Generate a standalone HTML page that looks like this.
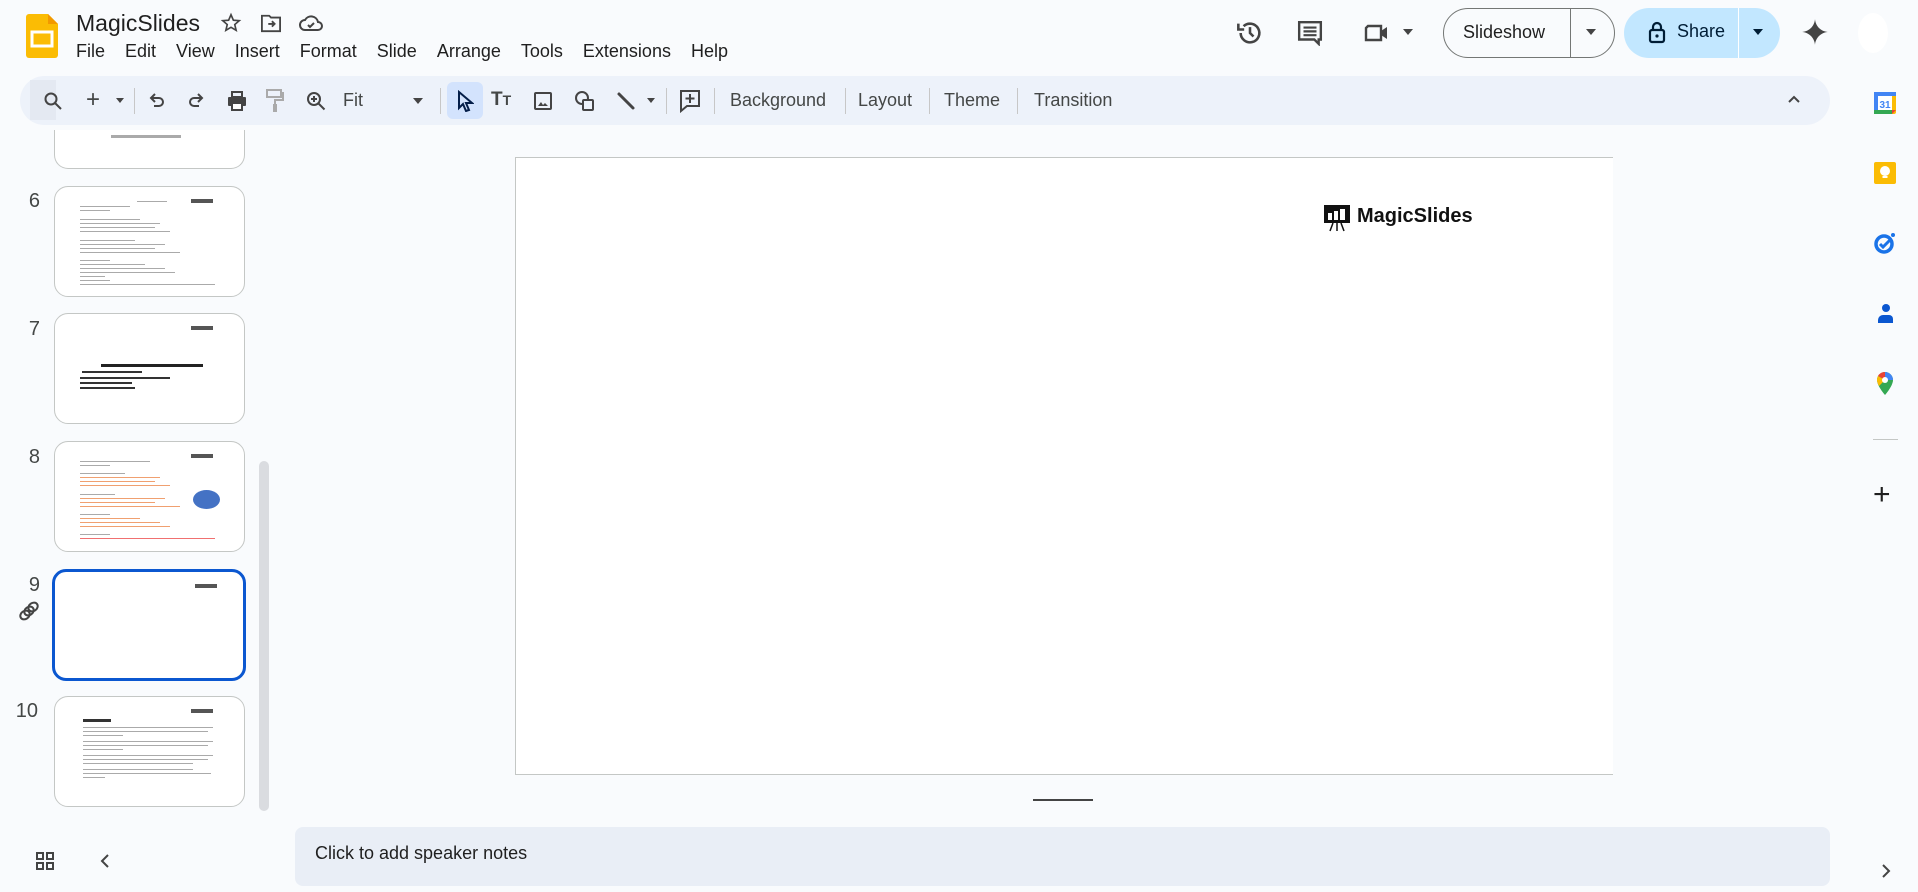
<!DOCTYPE html>
<html><head><meta charset="utf-8"><style>
*{margin:0;padding:0;box-sizing:border-box}
body{width:1918px;height:892px;background:#f9fbfd;font-family:"Liberation Sans",Arial,sans-serif;color:#1f1f1f;position:relative;overflow:hidden}
.a{position:absolute}
.menu span{margin-right:20px}
.tb{color:#444746;font-size:18px}
.thumb{position:absolute;left:54px;width:191px;height:111px;background:#fff;border:1px solid #c4c7c5;border-radius:14px;overflow:hidden}
.num{position:absolute;font-size:20px;color:#444746;text-align:right;width:40px;left:0}
.ln{position:absolute;height:2px;background:#aaa}
.sep{position:absolute;top:88px;width:1px;height:26px;background:#c7c7c7}
</style></head><body>
<!-- logo -->
<svg class="a" style="left:26px;top:14px" width="32" height="44" viewBox="0 0 32 44"><path d="M3 0h19l10 10v31a3 3 0 0 1-3 3H3a3 3 0 0 1-3-3V3a3 3 0 0 1 3-3z" fill="#fbbc04"/><path d="M22 0l10 10h-10z" fill="#f29900"/><rect x="6" y="18" width="20" height="14" fill="none" stroke="#fff" stroke-width="3"/></svg>
<div class="a" style="left:76px;top:10px;font-size:23px">MagicSlides</div>
<svg class="a" style="left:220px;top:12px" width="22" height="22" viewBox="0 0 24 24"><path d="M12 3l2.6 6 6.4.5-4.9 4.2 1.5 6.3L12 16.7 6.4 20l1.5-6.3L3 9.5l6.4-.5z" fill="none" stroke="#444" stroke-width="1.8"/></svg>
<svg class="a" style="left:260px;top:13px" width="22" height="20" viewBox="0 0 24 22"><path d="M2 3h8l2 2h10v15H2z" fill="none" stroke="#444" stroke-width="2"/><path d="M9 12h7M13 9l3 3-3 3" fill="none" stroke="#444" stroke-width="2"/></svg>
<svg class="a" style="left:299px;top:13px" width="24" height="20" viewBox="0 0 24 20"><path d="M6 17a5 5 0 0 1 0-10 7 7 0 0 1 13 2 4 4 0 0 1 0 8z" fill="none" stroke="#444" stroke-width="2"/><path d="M9 12l2 2 4-4" fill="none" stroke="#444" stroke-width="2"/></svg>
<div class="a menu" style="left:76px;top:41px;font-size:18px"><span>File</span><span>Edit</span><span>View</span><span>Insert</span><span>Format</span><span>Slide</span><span>Arrange</span><span>Tools</span><span>Extensions</span><span>Help</span></div>
<!-- header right -->
<svg class="a" style="left:1236px;top:19px" width="28" height="28" viewBox="0 0 24 24"><path d="M4 12a8 8 0 1 0 2.5-5.8" fill="none" stroke="#444" stroke-width="2.2"/><path d="M2 4v5h5" fill="none" stroke="#444" stroke-width="2.2"/><path d="M12 7v5l3 3" fill="none" stroke="#444" stroke-width="2.2"/></svg>
<svg class="a" style="left:1297px;top:20px" width="26" height="26" viewBox="0 0 24 24"><path d="M2 2h20v16h-2v4l-4-4H2z" fill="none" stroke="#444" stroke-width="2.2"/><path d="M6 7h12M6 10.5h12M6 14h12" stroke="#444" stroke-width="2"/></svg>
<svg class="a" style="left:1364px;top:21px" width="28" height="24" viewBox="0 0 28 24"><path d="M4 5h13v14H2V7z" fill="none" stroke="#444" stroke-width="2.4"/><path d="M17 10l6-4v12l-6-4z" fill="#444"/></svg>
<div class="a" style="left:1403px;top:29px;border:5px solid transparent;border-top:6px solid #444"></div>
<div class="a" style="left:1443px;top:8px;width:172px;height:50px;border:1px solid #747775;border-radius:25px"></div>
<div class="a" style="left:1463px;top:22px;font-size:18px;color:#1f1f1f">Slideshow</div>
<div class="a" style="left:1570px;top:8px;width:1px;height:50px;background:#747775"></div>
<div class="a" style="left:1586px;top:29px;border:5px solid transparent;border-top:6px solid #444"></div>
<div class="a" style="left:1624px;top:8px;width:156px;height:50px;background:#c2e7ff;border-radius:25px"></div>
<div class="a" style="left:1738px;top:8px;width:1px;height:50px;background:#fff"></div>
<svg class="a" style="left:1647px;top:20px" width="20" height="24" viewBox="0 0 20 24"><rect x="3" y="10" width="14" height="12" rx="2" fill="none" stroke="#001d35" stroke-width="2.2"/><path d="M6 10V7a4 4 0 0 1 8 0v3" fill="none" stroke="#001d35" stroke-width="2.2"/><circle cx="10" cy="16" r="1.6" fill="#001d35"/></svg>
<div class="a" style="left:1677px;top:21px;font-size:18px;color:#001d35">Share</div>
<div class="a" style="left:1753px;top:29px;border:5px solid transparent;border-top:6px solid #001d35"></div>
<svg class="a" style="left:1801px;top:18px" width="28" height="28" viewBox="0 0 24 24"><path d="M12 1C12.5 7 17 11.5 23 12 17 12.5 12.5 17 12 23 11.5 17 7 12.5 1 12 7 11.5 11.5 7 12 1z" fill="#444"/></svg>
<div class="a" style="left:1858px;top:13px;width:30px;height:40px;border-radius:50%;background:#fff"></div>
<!-- toolbar -->
<div class="a" style="left:20px;top:76px;width:1810px;height:49px;background:#edf2fa;border-radius:25px"></div>
<div class="a" style="left:30px;top:80px;width:26px;height:40px;background:#e4e9f2"></div>
<svg class="a" style="left:43px;top:91px" width="20" height="20" viewBox="0 0 20 20"><circle cx="8" cy="8" r="5.5" fill="none" stroke="#444" stroke-width="2"/><path d="M12 12l6 6" stroke="#444" stroke-width="2"/></svg>
<div class="a tb" style="left:86px;top:86px;font-size:24px">+</div>
<div class="a" style="left:116px;top:98px;border:4px solid transparent;border-top:5px solid #444"></div>
<div class="sep" style="left:134px"></div>
<svg class="a" style="left:148px;top:92px" width="18" height="18" viewBox="0 0 18 18"><path d="M4 6h7a4 4 0 0 1 0 8H6" fill="none" stroke="#444" stroke-width="2"/><path d="M7 2L3 6l4 4" fill="none" stroke="#444" stroke-width="2"/></svg>
<svg class="a" style="left:187px;top:92px" width="18" height="18" viewBox="0 0 18 18"><path d="M14 6H7a4 4 0 0 0 0 8h5" fill="none" stroke="#444" stroke-width="2"/><path d="M11 2l4 4-4 4" fill="none" stroke="#444" stroke-width="2"/></svg>
<svg class="a" style="left:226px;top:90px" width="22" height="22" viewBox="0 0 22 22"><rect x="6" y="2" width="10" height="5" fill="none" stroke="#444" stroke-width="2"/><rect x="2" y="7" width="18" height="9" rx="1" fill="#444"/><rect x="6" y="13" width="10" height="7" fill="#fff" stroke="#444" stroke-width="2"/></svg>
<svg class="a" style="left:265px;top:88px" width="20" height="26" viewBox="0 0 20 26"><rect x="2" y="2" width="14" height="7" fill="none" stroke="#aaa" stroke-width="2"/><path d="M16 5h2v7h-8v4" fill="none" stroke="#aaa" stroke-width="2"/><rect x="8" y="16" width="4" height="8" fill="#aaa"/></svg>
<svg class="a" style="left:305px;top:90px" width="22" height="22" viewBox="0 0 22 22"><circle cx="9" cy="9" r="6" fill="none" stroke="#444" stroke-width="2"/><path d="M13.5 13.5l6 6M6 9h6M9 6v6" stroke="#444" stroke-width="2"/></svg>
<div class="a tb" style="left:343px;top:90px">Fit</div>
<div class="a" style="left:413px;top:98px;border:5px solid transparent;border-top:6px solid #444"></div>
<div class="sep" style="left:440px"></div>
<div class="a" style="left:447px;top:82px;width:36px;height:37px;background:#d3e3fd;border-radius:6px"></div>
<svg class="a" style="left:456px;top:90px" width="18" height="22" viewBox="0 0 18 22"><path d="M3 2v16l4-4 3 7 3-1-3-7h6z" fill="none" stroke="#041e49" stroke-width="2"/></svg>
<div class="a tb" style="left:491px;top:89px;font-size:19px;font-weight:bold">T<span style="font-size:14px">T</span></div>
<svg class="a" style="left:533px;top:91px" width="20" height="20" viewBox="0 0 20 20"><rect x="2" y="2" width="16" height="16" rx="1" fill="none" stroke="#444" stroke-width="2"/><path d="M5 15l3-4 2 3 2-2 3 3z" fill="#444"/></svg>
<svg class="a" style="left:574px;top:90px" width="22" height="22" viewBox="0 0 22 22"><circle cx="8" cy="8" r="6" fill="none" stroke="#444" stroke-width="2"/><rect x="9" y="10" width="10" height="10" rx="1" fill="#edf2fa" stroke="#444" stroke-width="2"/></svg>
<svg class="a" style="left:615px;top:90px" width="22" height="22" viewBox="0 0 22 22"><path d="M4 4l14 14" stroke="#444" stroke-width="3" stroke-linecap="round"/></svg>
<div class="a" style="left:647px;top:98px;border:4px solid transparent;border-top:5px solid #444"></div>
<div class="sep" style="left:666px"></div>
<svg class="a" style="left:679px;top:89px" width="22" height="24" viewBox="0 0 22 24"><path d="M2 2h18v15H8l-6 5z" fill="none" stroke="#444" stroke-width="2"/><path d="M11 5v9M6.5 9.5h9" stroke="#444" stroke-width="2"/></svg>
<div class="sep" style="left:714px"></div>
<div class="a tb" style="left:730px;top:90px">Background</div>
<div class="sep" style="left:845px"></div>
<div class="a tb" style="left:858px;top:90px">Layout</div>
<div class="sep" style="left:929px"></div>
<div class="a tb" style="left:944px;top:90px">Theme</div>
<div class="sep" style="left:1017px"></div>
<div class="a tb" style="left:1034px;top:90px">Transition</div>
<svg class="a" style="left:1786px;top:93px" width="16" height="12" viewBox="0 0 16 12"><path d="M3 9l5-5 5 5" fill="none" stroke="#444" stroke-width="2"/></svg>
<!-- thumbnails -->
<div class="thumb" style="top:130px;height:39px;border-top:none;border-radius:0 0 14px 14px"><div class="ln" style="left:56px;top:5px;width:70px;height:3px;background:#aaa"></div></div>
<div class="num" style="top:190px">6</div>
<div class="thumb" style="top:186px">
<div class="ln" style="left:82px;top:14px;width:30px;height:1px"></div>
<div class="ln" style="left:136px;top:12px;width:22px;height:4px;background:#555"></div>
<div class="ln" style="left:25px;top:19px;width:50px;height:1px"></div><div class="ln" style="left:25px;top:23px;width:30px;height:1px"></div>
<div class="ln" style="left:25px;top:32px;width:60px;height:1px"></div><div class="ln" style="left:25px;top:36px;width:80px;height:1px"></div><div class="ln" style="left:25px;top:40px;width:75px;height:1px"></div><div class="ln" style="left:25px;top:44px;width:90px;height:1px"></div>
<div class="ln" style="left:25px;top:53px;width:55px;height:1px"></div><div class="ln" style="left:25px;top:57px;width:85px;height:1px"></div><div class="ln" style="left:25px;top:61px;width:75px;height:1px"></div><div class="ln" style="left:25px;top:65px;width:100px;height:1px"></div>
<div class="ln" style="left:25px;top:73px;width:30px;height:1px"></div><div class="ln" style="left:25px;top:77px;width:65px;height:1px"></div><div class="ln" style="left:25px;top:81px;width:85px;height:1px"></div><div class="ln" style="left:25px;top:85px;width:95px;height:1px"></div><div class="ln" style="left:25px;top:89px;width:25px;height:1px"></div><div class="ln" style="left:25px;top:93px;width:30px;height:1px"></div><div class="ln" style="left:25px;top:97px;width:135px;height:1px"></div>
</div>
<div class="num" style="top:318px">7</div>
<div class="thumb" style="top:313px">
<div class="ln" style="left:136px;top:12px;width:22px;height:4px;background:#555"></div>
<div class="ln" style="left:46px;top:50px;width:102px;height:3px;background:#222"></div>
<div class="ln" style="left:27px;top:57px;width:60px;height:2px;background:#333"></div>
<div class="ln" style="left:25px;top:63px;width:90px;height:2px;background:#333"></div>
<div class="ln" style="left:25px;top:68px;width:52px;height:2px;background:#333"></div>
<div class="ln" style="left:25px;top:73px;width:55px;height:2px;background:#333"></div>
</div>
<div class="num" style="top:446px">8</div>
<div class="thumb" style="top:441px">
<div class="ln" style="left:136px;top:12px;width:22px;height:4px;background:#555"></div>
<div class="ln" style="left:25px;top:19px;width:70px;height:1px"></div><div class="ln" style="left:25px;top:23px;width:30px;height:1px"></div>
<div class="ln" style="left:25px;top:31px;width:45px;height:1px"></div><div class="ln" style="left:25px;top:35px;width:80px;height:1px;background:#f0a070"></div><div class="ln" style="left:25px;top:39px;width:75px;height:1px;background:#f0a070"></div><div class="ln" style="left:25px;top:43px;width:90px;height:1px;background:#f0a070"></div>
<div class="ln" style="left:25px;top:52px;width:35px;height:1px"></div><div class="ln" style="left:25px;top:56px;width:85px;height:1px;background:#f0a070"></div><div class="ln" style="left:25px;top:60px;width:75px;height:1px;background:#f0a070"></div><div class="ln" style="left:25px;top:64px;width:100px;height:1px;background:#f0a070"></div>
<div class="ln" style="left:25px;top:72px;width:30px;height:1px"></div><div class="ln" style="left:25px;top:76px;width:60px;height:1px;background:#f0a070"></div><div class="ln" style="left:25px;top:80px;width:80px;height:1px;background:#f0a070"></div><div class="ln" style="left:25px;top:84px;width:90px;height:1px;background:#f0a070"></div><div class="ln" style="left:25px;top:92px;width:30px;height:1px"></div><div class="ln" style="left:25px;top:96px;width:135px;height:1px;background:#f07070"></div>
<div class="a" style="left:138px;top:48px;width:27px;height:19px;border-radius:50%;background:#4472c4"></div>
</div>
<div class="num" style="top:574px">9</div>
<svg class="a" style="left:18px;top:600px" width="22" height="22" viewBox="0 0 22 22"><g fill="none" stroke="#444" stroke-width="2"><ellipse cx="7" cy="15" rx="5" ry="4" transform="rotate(-35 7 15)"/><ellipse cx="11" cy="11" rx="5" ry="4" transform="rotate(-35 11 11)"/><ellipse cx="15" cy="7" rx="5" ry="4" transform="rotate(-35 15 7)"/></g></svg>
<div class="thumb" style="top:569px;left:52px;width:194px;height:112px;border:3px solid #0b57d0">
<div class="ln" style="left:140px;top:12px;width:22px;height:4px;background:#555"></div></div>
<div class="num" style="top:700px;left:-2px">10</div>
<div class="thumb" style="top:696px">
<div class="ln" style="left:136px;top:12px;width:22px;height:4px;background:#555"></div>
<div class="ln" style="left:28px;top:22px;width:28px;height:3px;background:#333"></div>
<div class="ln" style="left:28px;top:30px;width:130px;height:1px"></div><div class="ln" style="left:28px;top:34px;width:125px;height:1px"></div><div class="ln" style="left:28px;top:38px;width:40px;height:1px"></div>
<div class="ln" style="left:28px;top:44px;width:130px;height:1px"></div><div class="ln" style="left:28px;top:48px;width:125px;height:1px"></div><div class="ln" style="left:28px;top:52px;width:40px;height:1px"></div>
<div class="ln" style="left:28px;top:58px;width:130px;height:1px"></div><div class="ln" style="left:28px;top:62px;width:125px;height:1px"></div><div class="ln" style="left:28px;top:66px;width:110px;height:1px"></div>
<div class="ln" style="left:28px;top:72px;width:110px;height:1px"></div><div class="ln" style="left:28px;top:76px;width:128px;height:1px"></div><div class="ln" style="left:28px;top:80px;width:22px;height:1px"></div>
</div>
<div class="a" style="left:259px;top:461px;width:10px;height:350px;background:#dadce0;border-radius:5px"></div>
<svg class="a" style="left:35px;top:851px" width="20" height="20" viewBox="0 0 20 20"><g fill="none" stroke="#444" stroke-width="2"><rect x="2" y="2" width="6" height="6"/><rect x="12" y="2" width="6" height="6"/><rect x="2" y="12" width="6" height="6"/><rect x="12" y="12" width="6" height="6"/></g></svg>
<svg class="a" style="left:98px;top:852px" width="14" height="18" viewBox="0 0 14 18"><path d="M10 3L4 9l6 6" fill="none" stroke="#444" stroke-width="2"/></svg>
<!-- main slide -->
<div class="a" style="left:515px;top:157px;width:1098px;height:618px;background:#fff;border:1px solid #c4c7c5;border-right:none"></div>
<svg class="a" style="left:1323px;top:204px" width="28" height="28" viewBox="0 0 28 28"><rect x="1" y="1" width="26" height="18" fill="#111"/><rect x="5" y="9" width="4" height="7" fill="#fff"/><rect x="11" y="7" width="4" height="9" fill="#fff"/><rect x="17" y="5" width="5" height="11" fill="#fff"/><path d="M10 19l-3 8M14 19v8M18 19l3 8" stroke="#111" stroke-width="1.5"/></svg>
<div class="a" style="left:1357px;top:205px;font-size:20px;font-weight:bold;color:#111">MagicSlides</div>
<div class="a" style="left:1033px;top:799px;width:60px;height:2px;background:#444"></div>
<!-- notes -->
<div class="a" style="left:295px;top:827px;width:1535px;height:59px;background:#e9eef6;border-radius:8px"></div>
<div class="a" style="left:315px;top:843px;font-size:18px;color:#1f1f1f">Click to add speaker notes</div>
<!-- right sidebar -->
<svg class="a" style="left:1873px;top:91px" width="24" height="24" viewBox="0 0 24 24"><rect x="1" y="1" width="22" height="22" rx="2" fill="#fbbc04"/><rect x="1" y="1" width="18" height="18" fill="#fff"/><rect x="1" y="1" width="22" height="4" fill="#4285f4"/><rect x="1" y="1" width="4" height="22" fill="#4285f4"/><rect x="1" y="19" width="18" height="4" fill="#34a853"/><path d="M19 19h4l-4 4z" fill="#ea4335"/><text x="12" y="17" font-size="10" font-family="Liberation Sans" fill="#4285f4" text-anchor="middle" font-weight="bold">31</text></svg>
<svg class="a" style="left:1873px;top:161px" width="24" height="24" viewBox="0 0 24 24"><rect x="1" y="1" width="22" height="22" rx="2" fill="#fbbc04"/><circle cx="12" cy="10" r="5" fill="#fff"/><rect x="9.5" y="15" width="5" height="2" fill="#fff"/></svg>
<svg class="a" style="left:1873px;top:231px" width="24" height="24" viewBox="0 0 24 24"><circle cx="11" cy="13" r="8" fill="none" stroke="#1a73e8" stroke-width="3.5"/><path d="M7 13l3 3 8-8" fill="none" stroke="#1a73e8" stroke-width="3"/><circle cx="20" cy="4" r="2" fill="#1a73e8"/></svg>
<svg class="a" style="left:1873px;top:301px" width="24" height="24" viewBox="0 0 24 24"><circle cx="13" cy="7" r="4" fill="#0b57d0"/><path d="M5 22v-3a5 5 0 0 1 5-5h6a4 4 0 0 1 4 4v4z" fill="#0b57d0"/></svg>
<svg class="a" style="left:1875px;top:371px" width="20" height="26" viewBox="0 0 20 26"><path d="M10 1a8 8 0 0 1 8 8c0 6-8 15-8 15S2 15 2 9a8 8 0 0 1 8-8z" fill="#34a853"/><path d="M3 5a8 8 0 0 1 7-4v8z" fill="#ea4335"/><path d="M2 9a8 8 0 0 1 1-4l7 4-6 6c-1-2-2-4-2-6z" fill="#fbbc04"/><path d="M10 1a8 8 0 0 1 8 8h-8z" fill="#4285f4"/><circle cx="10" cy="9" r="3" fill="#fff"/></svg>
<div class="a" style="left:1873px;top:439px;width:25px;height:1px;background:#c4c7c5"></div>
<div class="a" style="left:1873px;top:478px;font-size:30px;color:#1f1f1f;font-weight:300">+</div>
<svg class="a" style="left:1879px;top:863px" width="14" height="16" viewBox="0 0 14 16"><path d="M4 2l6 6-6 6" fill="none" stroke="#444" stroke-width="2"/></svg>
</body></html>
